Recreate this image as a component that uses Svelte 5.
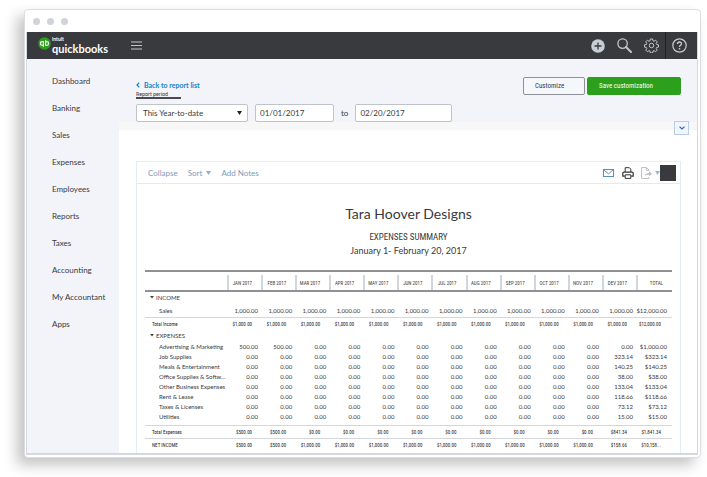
<script>
  const nav = ['Dashboard', 'Banking', 'Sales', 'Expenses', 'Employees', 'Reports', 'Taxes', 'Accounting', 'My Accountant', 'Apps'];
  const months = ['JAN', 'FEB', 'MAR', 'APR', 'MAY', 'JUN', 'JUL', 'AUG', 'SEP', 'OCT', 'NOV', 'DEV'].map((m) => m + ' 2017');
  const fill = (value, count) => Array(count).fill(value);

  const rows = [
    { kind: 'group', label: 'INCOME' },
    { kind: 'item sales', label: 'Sales', cells: [...fill('1,000.00', 12), '$12,000.00'] },
    { kind: 'total', label: 'Total Income', cells: [...fill('$1,000.00', 12), '$12,000.00'] },
    { kind: 'group', label: 'EXPENSES' },
    { kind: 'item', label: 'Advertising & Marketing', cells: ['500.00', '500.00', ...fill('0.00', 10), '$1,000.00'] },
    ...[
      ['Job Supplies', '323.14'],
      ['Meals & Entertainment', '140.25'],
      ['Office Supplies & Softw...', '38.00'],
      ['Other Business Expenses', '133.04'],
      ['Rent & Lease', '118.66'],
      ['Taxes & Licenses', '73.12'],
      ['Utilities', '15.00']
    ].map(([label, v]) => ({ kind: label === 'Utilities' ? 'item last' : 'item', label, cells: [...fill('0.00', 11), v, '$' + v] })),
    { kind: 'total', label: 'Total Expenses', cells: ['$500.00', '$500.00', ...fill('$0.00', 9), '$841.34', '$1,841.34'] },
    { kind: 'total', label: 'NET INCOME', cells: ['$500.00', '$500.00', ...fill('$1,000.00', 9), '$158.66', '$10,158...'] }
  ];
</script>

<div class="window">
  <div class="dots"><i></i><i></i><i></i></div>
  <div class="app">
    <header class="topbar">
      <a class="logo" href="#home" aria-label="Intuit QuickBooks">
        <svg width="13" height="13" viewBox="0 0 13 13" fill="none">
          <circle cx="6.5" cy="6.5" r="6.2" fill="#2ca01c" />
          <path d="M5.4 4.6H4.3a1.9 1.9 0 0 0 0 3.8h1.1M5.4 4.2v5.6M7.6 8.4h1.1a1.9 1.9 0 0 0 0-3.8H7.6M7.6 8.8V3.2" stroke="#fff" stroke-width="1.1" />
        </svg>
        <span class="words"><small>intuit</small><b>quickbooks</b></span>
      </a>
      <button class="plain menu" aria-label="Menu">
        <svg width="11" height="9" viewBox="0 0 11 9"><path d="M0 1h11M0 4.5h11M0 8h11" stroke="#c3c5c9" stroke-width="1.1" /></svg>
      </button>
      <div class="tools">
        <button class="plain" aria-label="Create">
          <svg width="14" height="14" viewBox="0 0 14 14"><circle cx="7" cy="7" r="6.8" fill="#c9ced6" /><path d="M7 3.5v7M3.5 7h7" stroke="#393a3d" stroke-width="1.3" /></svg>
        </button>
        <button class="plain" aria-label="Search">
          <svg width="15" height="15" viewBox="0 0 15 15" fill="none" stroke="#c3c7cd"><circle cx="5.6" cy="5.6" r="4.7" stroke-width="1.3" /><path d="M9 9l5 5" stroke-width="2" stroke-linecap="round" /></svg>
        </button>
        <button class="plain" aria-label="Settings">
          <svg width="15" height="15" viewBox="0 0 24 24" fill="none" stroke="#c3c7cd" stroke-width="1.6" stroke-linejoin="round">
            <circle cx="12" cy="12" r="3.6" />
            <path d="M10.2 1.5h3.6l.6 3 1.6.7 2.6-1.7 2.6 2.6-1.7 2.6.7 1.6 3 .6v3.6l-3 .6-.7 1.6 1.7 2.6-2.6 2.6-2.6-1.7-1.6.7-.6 3h-3.6l-.6-3-1.6-.7-2.6 1.7-2.6-2.6 1.7-2.6-.7-1.6-3-.6v-3.6l3-.6.7-1.6-1.7-2.6 2.6-2.6L8 5.2l1.6-.7z" />
          </svg>
        </button>
      </div>
      <button class="plain help" aria-label="Help">
        <svg width="15" height="15" viewBox="0 0 15 15" fill="none" stroke="#c9ccd1"><circle cx="7.5" cy="7.5" r="6.7" stroke-width="1.2" /><path d="M5.5 6c0-2.7 4-2.6 4-.2 0 1.5-2 1.5-2 3.2" stroke-width="1.3" /><path d="M7.5 10v1.4" stroke-width="1.4" /></svg>
      </button>
    </header>

    <div class="body">
      <nav>
        {#each nav as item}<a href="#{item}">{item}</a>{/each}
      </nav>

      <main>
        <section class="controls">
          <div>
            <a class="back" href="#reports">
              <svg width="4" height="6" viewBox="0 0 4 6" fill="none"><path d="M3.2.6L1 3l2.2 2.4" stroke="#0d84cf" stroke-width="1.2" /></svg>
              Back to report list
            </a>
            <label class="period narrow" for="period">Report period</label>
            <div class="fields">
              <div class="select">
                <select id="period"><option>This Year-to-date</option></select>
                <svg width="5" height="4" viewBox="0 0 5 4"><path d="M0 0h5L2.5 4z" fill="#222" /></svg>
              </div>
              <input class="from" aria-label="From date" value="01/01/2017" />
              <label for="to">to</label>
              <input class="until" id="to" value="02/20/2017" />
            </div>
          </div>
          <div class="actions">
            <button class="customize narrow">Customize</button>
            <button class="save narrow">Save customization</button>
          </div>
          <button class="toggle" aria-label="Collapse filters">
            <svg width="6" height="4" viewBox="0 0 6 4" fill="none"><path d="M.5.6L3 3 5.5.6" stroke="#2f62c4" stroke-width="1.2" /></svg>
          </button>
        </section>

        <section class="report">
          <div class="bar">
            <button class="plain">Collapse</button>
            <button class="plain sort">Sort <svg width="5" height="4" viewBox="0 0 5 4"><path d="M0 0h5L2.5 4z" fill="#8fb0c9" /></svg></button>
            <button class="plain">Add Notes</button>
            <span class="icons">
              <button class="plain mail" aria-label="Email">
                <svg width="11" height="8" viewBox="0 0 11 8" fill="none" stroke="#5f8fb3"><rect x=".5" y=".5" width="10" height="7" /><path d="M1 1l4.5 3.8L10 1" /></svg>
              </button>
              <button class="plain print" aria-label="Print">
                <svg width="12" height="12" viewBox="0 0 12 12" fill="none" stroke="#333437"><path d="M3.2 5V.7h4.2l1.4 1.5V5" /><path d="M2.8 9.2H.8V6.4q0-1.2 1.2-1.2h8q1.2 0 1.2 1.2v2.8h-2" stroke-width="1.2" /><path d="M3.2 7.8h5.6v3.6H3.2z" /></svg>
              </button>
              <button class="plain" aria-label="Export">
                <svg width="19" height="12" viewBox="0 0 19 12" fill="none" stroke="#b9bec6"><path d="M8 3.8V3L5.5.6H.6v10.8H8V10M5.4.8v2.6H8" /><path d="M4 9.2c.2-2.6 1.8-3.2 4-3.2V4.2l3 2.6-3 2.5V7.8c-1.6-.1-3 .2-4 1.4z" fill="#b9bec6" stroke="none" /><path d="M14 4h5l-2.5 4z" fill="#9db9d0" stroke="none" /></svg>
              </button>
              <button class="square" aria-label="More"></button>
            </span>
          </div>

          <h1>Tara Hoover Designs</h1>
          <h2 class="narrow">EXPENSES SUMMARY</h2>
          <p>January 1- February 20, 2017</p>

          <table>
            <colgroup>
              <col class="name" />
              {#each months as _}<col />{/each}
              <col class="sum" />
            </colgroup>
            <thead>
              <tr>
                <th></th>
                {#each [...months, 'TOTAL'] as m}<th scope="col" class="narrow"><div>{m}</div></th>{/each}
              </tr>
            </thead>
            <tbody>
              {#each rows as row}
                <tr class={row.kind}>
                  {#if row.cells}
                    <th scope="row">{row.label}</th>
                    {#each row.cells as cell}<td>{cell}</td>{/each}
                  {:else}
                    <th scope="rowgroup" colspan="14"><svg width="4" height="3" viewBox="0 0 4 3"><path d="M0 0h4L2 2.6z" fill="#444" /></svg>{row.label}</th>
                  {/if}
                </tr>
              {/each}
            </tbody>
          </table>
        </section>
      </main>
    </div>
  </div>
</div>

<style>
  :global(body) {
    background: #fff;
  }
  .window,
  .window * {
    box-sizing: border-box;
  }
  .window {
    --narrow: "Roboto Condensed", "Liberation Sans Narrow", "Open Sans Condensed", "Open Sans", sans-serif;
    margin: 9px 6px 19px 24px;
    padding: 0 2px 2px 1px;
    border: 1px solid #dcdde0;
    border-radius: 4px;
    background: #fff;
    box-shadow: -7px 7px 14px rgba(0, 0, 0, 0.24);
    font: 8px/10px Lato, "Open Sans", sans-serif;
    color: #393a3d;
  }
  .dots {
    display: flex;
    gap: 7px;
    padding: 8px 0 7px 7px;
  }
  .dots i {
    width: 7px;
    height: 7px;
    border-radius: 50%;
    background: #d0d3da;
  }
  .app {
    border: solid #d5d8e0;
    border-width: 0 1px 2px 1px;
  }
  button,
  input,
  select {
    margin: 0;
    font-family: inherit;
    font-size: 8px;
    line-height: 10px;
    color: inherit;
  }
  .narrow {
    font-family: var(--narrow);
  }
  a {
    color: inherit;
    text-decoration: none;
  }
  svg {
    display: block;
    flex: none;
  }
  .plain {
    display: block;
    padding: 0;
    border: 0;
    background: none;
  }

  .topbar {
    display: flex;
    align-items: center;
    height: 27px;
    padding-left: 11px;
    background: #393a3d;
    color: #fff;
  }
  .logo {
    display: flex;
    gap: 1px;
    width: 93px;
  }
  .words small,
  .words b {
    display: block;
  }
  .words small {
    font-size: 5px;
    line-height: 5px;
    font-weight: 700;
  }
  .words b {
    font-size: 11px;
    line-height: 13px;
  }
  .tools {
    display: flex;
    align-items: center;
    gap: 12px;
    margin-left: auto;
    padding-right: 6px;
  }
  .help {
    height: 27px;
    padding: 0 10px 0 6px;
    border-left: 1px solid #202124;
  }

  .body {
    display: flex;
    background: #f3f4f9;
  }
  nav {
    flex: none;
    width: 92px;
    padding: 9px 0 0 25px;
  }
  nav a {
    display: block;
    line-height: 27px;
    white-space: nowrap;
  }
  main {
    flex: 1;
    min-width: 0;
    background: #fff;
  }

  .controls {
    position: relative;
    display: flex;
    justify-content: space-between;
    height: 71px;
    padding: 18px 16px 0 17px;
    border-bottom: 8px solid #f7f7f7;
    background: #f3f4f9;
  }
  .back {
    display: flex;
    align-items: center;
    gap: 4px;
    margin-top: 3px;
    font-size: 7px;
    font-weight: 700;
    color: #0d84cf;
  }
  .period {
    display: block;
    width: 45px;
    height: 9px;
    border-bottom: 2px solid #4a4b4e;
    font-size: 6px;
    line-height: 7px;
    white-space: nowrap;
  }
  .fields {
    display: flex;
    align-items: center;
    gap: 7px;
    margin-top: 5px;
  }
  .select {
    position: relative;
    width: 112px;
  }
  .select svg {
    position: absolute;
    right: 6px;
    top: 7px;
  }
  select,
  input {
    display: block;
    height: 18px;
    padding: 0 6px;
    border: 1px solid #bfc3cb;
    border-radius: 2px;
    background: #fff;
    appearance: none;
  }
  select {
    width: 100%;
  }
  .from {
    width: 79px;
    padding: 0 4px;
  }
  .until {
    width: 97px;
    padding: 0 4px;
  }
  .actions {
    display: flex;
    gap: 2px;
  }
  .actions button {
    height: 18px;
    padding: 0 11px;
    border: 1px solid #8d9096;
    border-radius: 2px;
    background: #f6f7fb;
    font-size: 7px;
    text-align: left;
  }
  .actions .customize {
    width: 62px;
  }
  .actions .save {
    width: 94px;
    border-color: #2ca01c;
    background: #2ca01c;
    color: #fff;
  }
  .toggle {
    position: absolute;
    right: 8px;
    top: 62px;
    display: grid;
    place-items: center;
    width: 15px;
    height: 14px;
    padding: 0;
    border: 1px solid #b9cdea;
    background: #eff6fd;
  }

  .report {
    margin: 31px 16px 0 17px;
    border: 1px solid #e3edf6;
    border-bottom: 0;
    padding-bottom: 2px;
  }
  .bar {
    display: flex;
    align-items: center;
    gap: 10px;
    height: 22px;
    padding: 0 4px 0 11px;
    border-bottom: 1px solid #dfebf5;
    color: #7c9cb8;
  }
  .sort,
  .icons {
    display: flex;
    align-items: center;
  }
  .sort {
    gap: 4px;
  }
  .icons {
    margin-left: auto;
  }
  .mail {
    margin-right: 8px;
  }
  .print {
    margin-right: 7px;
  }
  .square {
    width: 16px;
    height: 16px;
    padding: 0;
    border: 0;
    background: #393a3d;
  }

  h1,
  h2,
  p {
    margin: 0;
    text-align: center;
    font-weight: 400;
  }
  h1 {
    margin-top: 21px;
    font-size: 14px;
    line-height: 18px;
  }
  h2 {
    margin-top: 8px;
    font-size: 9px;
    line-height: 12px;
  }
  p {
    margin-top: 1px;
    font-size: 9px;
    line-height: 14px;
  }

  table {
    width: calc(100% - 16px);
    margin: 12px 8px 0;
    border-collapse: separate;
    border-spacing: 0;
    table-layout: fixed;
    font-size: 6px;
    line-height: 10px;
  }
  .name {
    width: 82px;
  }
  .sum {
    width: 36px;
  }
  th,
  td {
    padding: 0 3px 0 0;
    font-weight: 400;
    text-align: right;
    white-space: nowrap;
  }
  thead th {
    height: 22px;
    padding: 3px 0 0;
    border: solid #909195;
    border-width: 2px 0;
  }
  thead div {
    height: 15px;
    padding-right: 9px;
    border-left: 2px solid #d3d5dc;
    line-height: 17px;
    font-size: 5px;
  }
  tbody th {
    text-align: left;
  }
  td:last-child {
    padding-right: 5px;
  }
  .group th {
    height: 12px;
    padding-left: 5px;
  }
  .group svg {
    display: inline-block;
    margin-right: 2px;
    vertical-align: 1px;
  }
  .item th {
    padding-left: 14px;
  }
  .sales th,
  .sales td {
    height: 13px;
  }
  .last th,
  .last td {
    height: 13px;
    vertical-align: top;
  }
  .total th,
  .total td {
    height: 13px;
    border-top: 1px solid #d5d6da;
    font-family: var(--narrow);
    font-size: 5px;
    color: #222326;
  }
  .total th {
    padding-left: 7px;
  }
  .total td {
    padding-right: 9px;
  }
  .total td:last-child {
    padding-right: 11px;
  }
</style>
